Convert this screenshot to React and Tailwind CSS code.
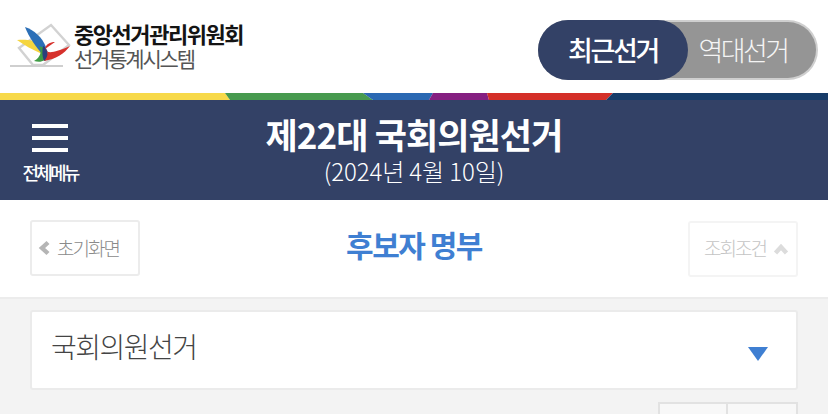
import React from 'react';

const krFont = "font-['Noto_Sans_CJK_KR','Noto_Sans',sans-serif]";

// drawn in page coordinates, so the viewBox starts at the logo's place on the page
const Logo = () => (
  <svg width="64" height="46" viewBox="10 21 64 46" className="shrink-0">
    <path d="M51 24 L69 44 L43 64 L33 64 L19 47 Z" fill="none" stroke="#d2d2d2" strokeWidth="2.4" />
    <rect x="10" y="64" width="53" height="2" fill="#cfcfcf" />
    <path d="M17 39 C25 38 34 39 38 42 L42 53 C33 49 24 44 17 39 Z" fill="#f5d53f" />
    <path d="M25 26 C34 29 42 36 46 46 L43 54 C37 47 29 37 25 26 Z" fill="#2c6fb7" />
    <path d="M39 45 C42 50 41 56 34 60 C41 62 46 60 48 54 L45 47 Z" fill="#3f9c45" />
    <path d="M43 45 C46 46 48 50 48 54 C48 57 46 60 44 60 C42 55 42 50 43 45 Z" fill="#2a3f7c" />
    <path d="M55 41 C50 41 46 43 45 48 C47 53 54 52 70 45 C64 53 56 58 44 60 C49 55 48 50 45 48 Z" fill="#d6312c" />
  </svg>
);

const Stripe = () => (
  <svg width="828" height="7" viewBox="0 0 828 7" className="block">
    <polygon points="0,0 225,0 230,7 0,7" fill="#f7d94a" />
    <polygon points="225,0 363,0 373,7 230,7" fill="#479a4f" />
    <polygon points="363,0 433,0 429,7 373,7" fill="#2a68b2" />
    <polygon points="433,0 487,0 489,7 429,7" fill="#851f81" />
    <polygon points="487,0 613,0 606,7 489,7" fill="#d42f28" />
    <polygon points="613,0 828,0 828,7 606,7" fill="#173c69" />
  </svg>
);

const Chevron = ({ up, color }) => (
  <svg width="14" height="16" viewBox="0 0 14 16" className={up ? 'rotate-90 shrink-0' : 'shrink-0'}>
    <path d="M11 2.5 L5 8 L11 13.5" fill="none" stroke={color} strokeWidth="4.4" />
  </svg>
);

export default function App() {
  return (
    <div className={`w-[828px] h-[414px] overflow-hidden bg-[#f3f3f3] ${krFont}`}>
      <header className="h-[93px] bg-white flex items-center justify-between pl-[10px] pr-[10px]">
        <div className="flex items-center -mt-[3px]">
          <Logo />
          <div className="flex flex-col">
            <div className="text-[22px] leading-[25px] font-bold text-[#141414] tracking-[-1.45px]">중앙선거관리위원회</div>
            <div className="text-[21px] leading-[24px] text-[#555] tracking-[-2.2px]">선거통계시스템</div>
          </div>
        </div>
        <div className="flex w-[280px] h-[60px] rounded-[30px] bg-[#959595] border-2 border-[#cfcfcf] border-l-0 items-stretch mt-[7px] box-border">
          <div className="w-[150px] -my-[2px] rounded-[30px] bg-[#334166] text-white text-[27px] font-medium tracking-[-2.4px] flex items-center justify-center">최근선거</div>
          <div className="flex-1 text-[#f4f4f4] text-[27px] font-light tracking-[-2.6px] flex items-center justify-center pr-[18px]">역대선거</div>
        </div>
      </header>

      <Stripe />

      <nav className="h-[100px] bg-[#334166] flex text-white relative">
        <div className="w-[100px] flex flex-col items-center pt-[24px]">
          <span className="w-[36px] h-[4px] bg-white" />
          <span className="w-[36px] h-[4px] bg-white mt-[8px]" />
          <span className="w-[36px] h-[4px] bg-white mt-[8px]" />
          <div className="text-[18px] leading-[22px] font-medium tracking-[-2.8px] mt-[9px]">전체메뉴</div>
        </div>
        <div className="absolute inset-x-0 top-0 flex flex-col items-center pt-[11px]">
          <div className="text-[35px] leading-[46px] font-bold tracking-[-0.9px]">제22대 국회의원선거</div>
          <div className="text-[24px] leading-[28px] font-light tracking-[-0.1px]">(2024년 4월 10일)</div>
        </div>
      </nav>

      <section className="h-[99px] bg-white border-b-2 border-[#ececec] flex items-center justify-between pl-[30px] pr-[30px] relative">
        <button className="w-[110px] h-[56px] bg-white border-2 border-[#ececec] rounded-[3px] flex items-center pl-[5px] text-[#8a8a8a] text-[19px] font-light tracking-[-2px] gap-[6px] -mt-[1px]">
          <Chevron color="#b5b5b5" />
          초기화면
        </button>
        <h1 className="absolute inset-x-0 text-center text-[#3f7fd2] text-[30px] font-bold tracking-[-1.5px] -mt-[9px]">후보자 명부</h1>
        <button className="w-[110px] h-[56px] bg-white border-2 border-[#f4f4f4] rounded-[3px] flex items-center justify-end pr-[8px] text-[#c4c4c4] text-[19px] font-light tracking-[-2px] gap-[8px]">
          조회조건
          <Chevron up color="#dcdcdc" />
        </button>
      </section>

      <div className="px-[30px] pt-[11px]">
        <div className="h-[80px] bg-white border-2 border-[#ebebeb] rounded-[3px] flex items-center justify-between pl-[19px] pr-[28px]">
          <span className="text-[28px] font-light text-[#444] tracking-[-1.5px] mb-[8px]">국회의원선거</span>
          <span className="w-0 h-0 border-x-[10px] border-x-transparent border-t-[14px] border-t-[#3f7fd2] mt-[8px]" />
        </div>
        <div className="flex justify-end mt-[12px]">
          <div className="w-[140px] h-[40px] bg-[#f8f8f8] border-2 border-[#e2e2e2] flex">
            <div className="w-[68px] border-r-2 border-[#e2e2e2]" />
          </div>
        </div>
      </div>
    </div>
  );
}
